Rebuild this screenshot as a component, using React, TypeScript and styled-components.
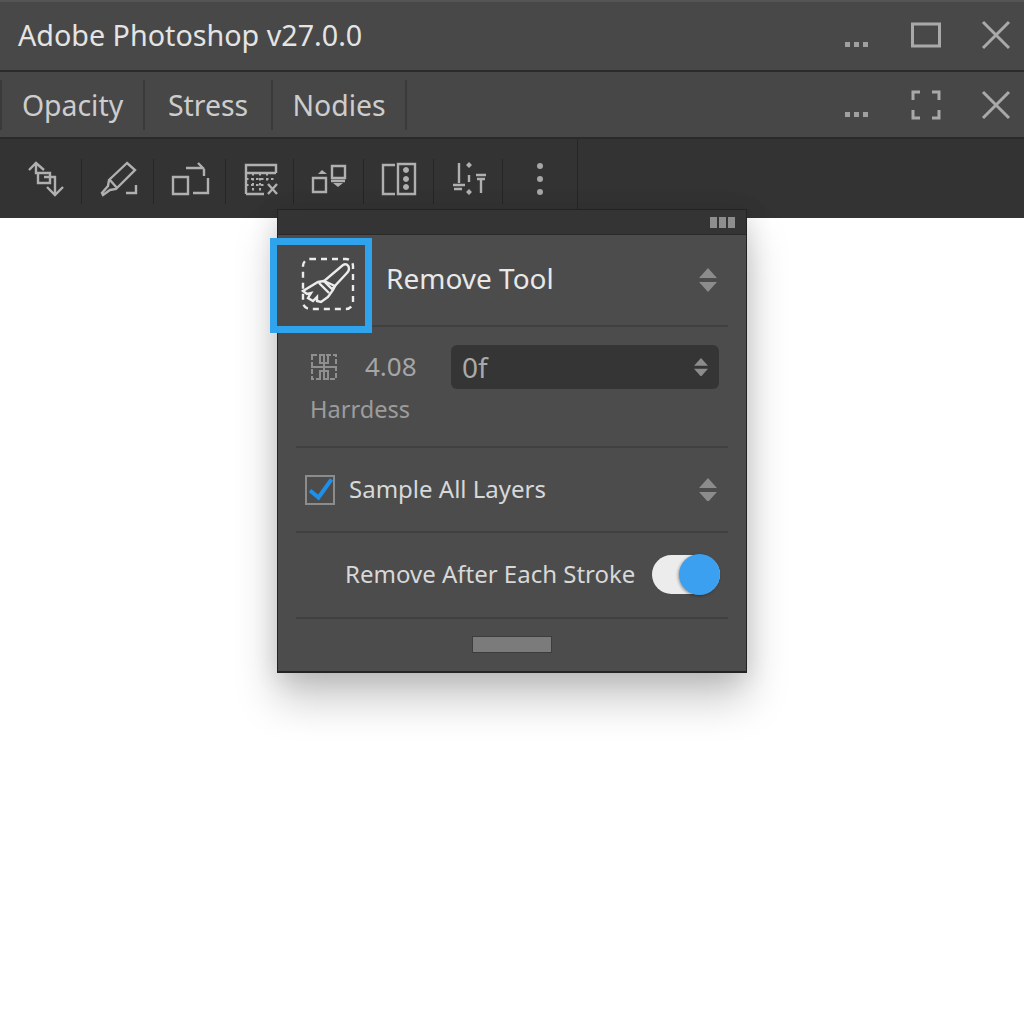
import React from 'react'
import styled, { createGlobalStyle } from 'styled-components'

const GlobalStyle = createGlobalStyle`
  html, body {
    margin: 0;
    padding: 0;
    background: #ffffff;
  }
  body {
    font-family: 'Noto Sans', 'Open Sans', sans-serif;
  }
`

const Page = styled.div`
  position: relative;
  width: 1024px;
  height: 1024px;
  overflow: hidden;
  background: #ffffff;
`

const TitleBar = styled.div`
  height: 72px;
  box-sizing: border-box;
  padding: 0 11px 3px 18px;
  display: flex;
  align-items: center;
  justify-content: space-between;
  background: #484848;
  border-top: 2px solid #555;
  border-bottom: 2px solid #2b2b2b;
`

const Title = styled.div`
  font-size: 28.7px;
  line-height: 34px;
  color: #e4e4e4;
  white-space: nowrap;
`

const WindowButtons = styled.div`
  display: flex;
  align-items: center;
`

const WinIcon = styled.svg`
  display: block;
  width: 34px;
  height: 34px;
  margin-left: 36px;
  fill: none;
  stroke: #a9a9a9;
  stroke-width: 3;
`

const Ellipsis = styled.div`
  display: flex;
  gap: 4px;
  margin-top: 20px;
  margin-right: 5px;
`

const EllipsisDot = styled.span`
  width: 5px;
  height: 5px;
  background: #a0a0a0;
`

const TabBar = styled.div`
  height: 67px;
  box-sizing: border-box;
  padding-right: 11px;
  display: flex;
  align-items: center;
  justify-content: space-between;
  background: #474747;
  border-bottom: 2px solid #2a2a2a;
`

const Tabs = styled.div`
  display: flex;
  align-items: center;
  height: 50px;
  border-left: 2px solid #3a3a3a;
`

const Tab = styled.div<{ $width: number }>`
  width: ${p => p.$width}px;
  height: 100%;
  box-sizing: border-box;
  display: flex;
  align-items: center;
  justify-content: center;
  border-right: 2px solid #3a3a3a;
  font-size: 28.4px;
  color: #cdcdcd;
`

const ToolBar = styled.div`
  height: 79px;
  box-sizing: border-box;
  padding-left: 10px;
  display: flex;
  align-items: stretch;
  background: #333333;
`

const ToolCell = styled.div<{ $width: number; $strong?: boolean }>`
  width: ${p => p.$width}px;
  box-sizing: border-box;
  padding-right: ${p => (p.$strong ? 2 : 0)}px;
  display: flex;
  align-items: center;
  justify-content: center;
  position: relative;
  &::after {
    content: '';
    position: absolute;
    right: 0;
    top: ${p => (p.$strong ? 0 : 20)}px;
    bottom: ${p => (p.$strong ? 0 : 14)}px;
    width: 1px;
    background: #262626;
  }
`

const ToolIcon = styled.svg`
  display: block;
  width: 40px;
  height: 40px;
  fill: none;
  stroke: #b0b0b0;
  stroke-width: 2.4;
`

const ToolDots = styled.path`
  stroke-dasharray: 2.5 2.5;
  stroke-width: 2;
`

const Kebab = styled.div`
  display: flex;
  flex-direction: column;
  gap: 7px;
  align-items: center;
`

const KebabDot = styled.span`
  width: 6px;
  height: 6px;
  border-radius: 50%;
  background: #a6a6a6;
`

const Panel = styled.div`
  position: absolute;
  left: 277px;
  top: 209px;
  width: 470px;
  height: 464px;
  box-sizing: border-box;
  display: flex;
  flex-direction: column;
  background: #4c4c4c;
  border: 1px solid #232323;
  border-bottom-width: 2px;
  box-shadow: 0 26px 40px rgba(0, 0, 0, 0.22), 0 4px 24px rgba(0, 0, 0, 0.12);
`

const PanelGrip = styled.div`
  height: 24px;
  flex: none;
  display: flex;
  justify-content: flex-end;
  align-items: center;
  gap: 2px;
  padding-right: 11px;
  background: #343434;
  border-bottom: 1px solid #2a2a2a;
`

const GripBar = styled.span`
  width: 7px;
  height: 11px;
  background: #8e8e8e;
`

const Section = styled.div<{ $height: number }>`
  height: ${p => p.$height}px;
  flex: none;
  box-sizing: border-box;
  margin: 0 18px;
  border-bottom: 2px solid #404040;
  display: flex;
  align-items: center;
  position: relative;
`

const ToolFrame = styled.div`
  position: absolute;
  left: -26px;
  top: 3px;
  width: 102px;
  height: 95px;
  box-sizing: border-box;
  padding: 0 0 4px 14px;
  display: flex;
  align-items: center;
  justify-content: center;
  background: #4a4a4a;
  border: 7px solid #2fa4ec;
`

const ToolName = styled.div`
  margin-left: 90px;
  margin-top: -4px;
  font-size: 28px;
  color: #e8e8e8;
`

const Stepper = styled.svg<{ $size?: number }>`
  display: block;
  width: ${p => p.$size ?? 18}px;
  height: ${p => (p.$size ?? 18) * 1.33}px;
  fill: #8c8c8c;
  margin-left: auto;
  margin-right: 11px;
`

const HardnessBody = styled.div`
  width: 100%;
  margin-top: -1px;
  display: flex;
  flex-direction: column;
  padding: 0 9px 0 14px;
  box-sizing: border-box;
`

const HardnessRow = styled.div`
  display: flex;
  align-items: center;
`

const Value = styled.span`
  width: 86px;
  margin: -3px 0 0 27px;
  font-size: 26px;
  color: #a6a6a6;
`

const Select = styled.div`
  flex: 1;
  height: 44px;
  box-sizing: border-box;
  padding-left: 11px;
  display: flex;
  align-items: center;
  border-radius: 6px;
  background: #353535;
  font-size: 28px;
  color: #a9a9a9;
`

const Hint = styled.div`
  margin-top: 2px;
  font-size: 23.6px;
  line-height: 36px;
  color: #9c9c9c;
`

const CheckBox = styled.div`
  width: 30px;
  height: 30px;
  margin-left: 9px;
  box-sizing: border-box;
  border: 2px solid #8c8c8c;
  display: flex;
  align-items: center;
  justify-content: center;
`

const RowLabel = styled.span<{ $indent: number }>`
  margin-left: ${p => p.$indent}px;
  margin-top: -3px;
  font-size: 24px;
  color: #d8d8d8;
  white-space: nowrap;
`

const Switch = styled.div`
  position: absolute;
  right: 8px;
  top: 22px;
  width: 68px;
  height: 39px;
  border-radius: 20px;
  background: #ececec;
`

const SwitchKnob = styled.div`
  position: absolute;
  right: 0;
  top: -1px;
  width: 41px;
  height: 41px;
  border-radius: 50%;
  background: #3ca0f0;
  box-shadow: -1px 1px 3px rgba(0, 0, 0, 0.35);
`

const PanelFoot = styled.div`
  flex: 1;
  display: flex;
  align-items: flex-start;
  justify-content: center;
  padding-top: 17px;
`

const Handle = styled.div`
  width: 80px;
  height: 17px;
  box-sizing: border-box;
  background: #7b7b7b;
  border: 1px solid #3d3d3d;
`

const EllipsisIcon = () => (
  <Ellipsis>
    <EllipsisDot />
    <EllipsisDot />
    <EllipsisDot />
  </Ellipsis>
)

const Close = () => (
  <WinIcon viewBox="0 0 34 34">
    <path d="M4 4l26 26M30 4L4 30" />
  </WinIcon>
)

const StepperIcon = ({ size }: { size?: number }) => (
  <Stepper $size={size} viewBox="0 0 18 24">
    <path d="M9 0l9 10H0z" />
    <path d="M9 24l9-10H0z" />
  </Stepper>
)

type Tool = {
  width: number
  d: string
  dashed?: string
  filled?: string
}

const tools: Tool[] = [
  {
    width: 72,
    d: 'M3 11l7-7 8 7M10 5v9h14v10H12V14M18 18h11v17M21 28l8 8 8-8',
  },
  {
    width: 72,
    d: 'M29 4l8 7-19 19-6 1-7 5-1-2 6-7 1-6zM12 21l7 8M38 26v8H28',
  },
  {
    width: 72,
    d: 'M3 18h15v17H3zM16 9h17M28 4l6 6M34 10v7M38 19v15H23',
  },
  {
    width: 68,
    d: 'M6 35V6h30v8M6 35h18M6 14h30M28 25l9 10M37 25l-9 10',
    dashed: 'M6 20h28M6 26h20M13 14v20M20 14v20M27 14v10',
  },
  {
    width: 70,
    d: 'M4 19h13v14H4zM23 7h13v12H23zM22 22h14',
    filled: 'M9 15l4-4 5 4zM24 24h10l-5 4z',
  },
  {
    width: 70,
    d: 'M16 6H4v29h12M19 5h17v30H19z',
    filled: 'M27 8a3 3 0 1 0 .01 0zM27 17a3 3 0 1 0 .01 0zM27 25a3 3 0 1 0 .01 0z',
  },
  {
    width: 69,
    d: 'M10 4v20M4 26h12M5 30h8M20 16v7M27 16h10M32 20v14M28 20h8',
    filled: 'M20 3l3 3-3 3-3-3zM20 30l3 3-3 3-3-3z',
  },
]

const App = () => {
  return (
    <Page>
      <GlobalStyle />
      <TitleBar>
        <Title>Adobe Photoshop v27.0.0</Title>
        <WindowButtons>
          <EllipsisIcon />
          <WinIcon viewBox="0 0 34 34">
            <path d="M3.5 6h27v22h-27z" />
          </WinIcon>
          <Close />
        </WindowButtons>
      </TitleBar>
      <TabBar>
        <Tabs>
          <Tab $width={143}>Opacity</Tab>
          <Tab $width={128}>Stress</Tab>
          <Tab $width={134}>Nodies</Tab>
        </Tabs>
        <WindowButtons>
          <EllipsisIcon />
          <WinIcon viewBox="0 0 34 34">
            <path d="M11 4H4v8M23 4h7v8M4 22v8h7M30 22v8h-7" />
          </WinIcon>
          <Close />
        </WindowButtons>
      </TabBar>
      <ToolBar>
        {tools.map(tool => (
          <ToolCell key={tool.d} $width={tool.width}>
            <ToolIcon viewBox="0 0 40 40">
              <path d={tool.d} />
              {tool.dashed && <ToolDots d={tool.dashed} />}
              {tool.filled && <path d={tool.filled} fill="#b0b0b0" stroke="none" />}
            </ToolIcon>
          </ToolCell>
        ))}
        <ToolCell $width={75} $strong>
          <Kebab>
            <KebabDot />
            <KebabDot />
            <KebabDot />
          </Kebab>
        </ToolCell>
      </ToolBar>
      <Panel>
        <PanelGrip>
          <GripBar />
          <GripBar />
          <GripBar />
        </PanelGrip>
        <Section $height={92}>
          <ToolFrame>
            <svg width="54" height="54" viewBox="0 0 54 54" fill="none" stroke="#ececec" strokeWidth="2.4">
              <rect x="2" y="2" width="50" height="50" rx="7" strokeDasharray="6 5" />
              <path d="M42 8c3-2 6 0 6 4 0 2-1 3-3 5L31 32l-8-8z" />
              <path d="M23 24l-6 1-15 9 4 3 4-1-3 5 5 3 4-4 0 4 4 1 7-5 5-7 2-4zM18 26l10 10" />
            </svg>
          </ToolFrame>
          <ToolName>Remove Tool</ToolName>
          <StepperIcon size={18} />
        </Section>
        <Section $height={121}>
          <HardnessBody>
            <HardnessRow>
              <svg width="28" height="28" viewBox="0 0 28 28" fill="none" stroke="#8f8f8f" strokeWidth="2">
                <path d="M2 2h24v24H2z" strokeDasharray="5 2" />
                <path d="M1 14h26M14 1v26M10 1v9h8V1M10 27v-9h8v9" />
              </svg>
              <Value>4.08</Value>
              <Select>
                0f
                <StepperIcon size={14} />
              </Select>
            </HardnessRow>
            <Hint>Harrdess</Hint>
          </HardnessBody>
        </Section>
        <Section $height={85}>
          <CheckBox>
            <svg width="26" height="26" viewBox="0 0 26 26" fill="none" stroke="#1f90ea" strokeWidth="4">
              <path d="M3 13.5l8.5 7L24.5 2.5" />
            </svg>
          </CheckBox>
          <RowLabel $indent={14}>Sample All Layers</RowLabel>
          <StepperIcon size={18} />
        </Section>
        <Section $height={86}>
          <RowLabel $indent={49}>Remove After Each Stroke</RowLabel>
          <Switch>
            <SwitchKnob />
          </Switch>
        </Section>
        <PanelFoot>
          <Handle />
        </PanelFoot>
      </Panel>
    </Page>
  )
}

export default App
